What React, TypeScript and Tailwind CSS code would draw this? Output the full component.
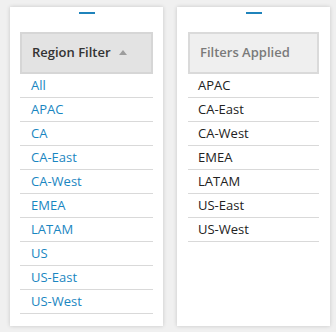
import React from "react";

const left = ["All", "APAC", "CA", "CA-East", "CA-West", "EMEA", "LATAM", "US", "US-East", "US-West"];
const right = ["APAC", "CA-East", "CA-West", "EMEA", "LATAM", "US-East", "US-West"];

export default function App() {
  return (
    <div
      className="w-[336px] h-[332px] bg-[#f0f0f0] flex gap-[14px] pl-[10px] pt-[7px]"
      style={{ fontFamily: '"Open Sans", sans-serif' }}
    >
      <div className="w-[153px] h-[319px] bg-white shadow-[0_0_4px_rgba(0,0,0,0.18)] flex flex-col px-[10px]">
        <div className="flex justify-center pt-[5px]">
          <div className="w-[16px] h-[2px] bg-[#1f83bb]" />
        </div>
        <div className="mt-[18px] h-[42px] bg-[#e3e3e3] border-2 border-[#d6d6d6] flex items-center pl-[10px] gap-[8px]">
          <span className="text-[13px] font-semibold text-[#333]">Region Filter</span>
          <svg width="8" height="5" viewBox="0 0 8 5" className="mt-[-1px]">
            <polygon points="4,0 8,5 0,5" fill="#9d9d9d" />
          </svg>
        </div>
        {left.map((t) => (
          <div key={t} className="h-[24px] border-b border-[#d9d9d9] flex items-center pl-[11px] text-[13px] text-[#1a86c1]">
            {t}
          </div>
        ))}
      </div>
      <div className="w-[153px] h-[319px] bg-white shadow-[0_0_4px_rgba(0,0,0,0.18)] flex flex-col px-[11px]">
        <div className="flex justify-center pt-[5px]">
          <div className="w-[16px] h-[2px] bg-[#1f83bb]" />
        </div>
        <div className="mt-[18px] h-[42px] bg-[#efefef] border-2 border-[#dadada] flex items-center pl-[10px]">
          <span className="text-[13px] font-semibold text-[#7a7a7a]">Filters Applied</span>
        </div>
        {right.map((t) => (
          <div key={t} className="h-[24px] border-b border-[#d9d9d9] flex items-center pl-[10px] text-[13px] text-[#222]">
            {t}
          </div>
        ))}
      </div>
    </div>
  );
}
